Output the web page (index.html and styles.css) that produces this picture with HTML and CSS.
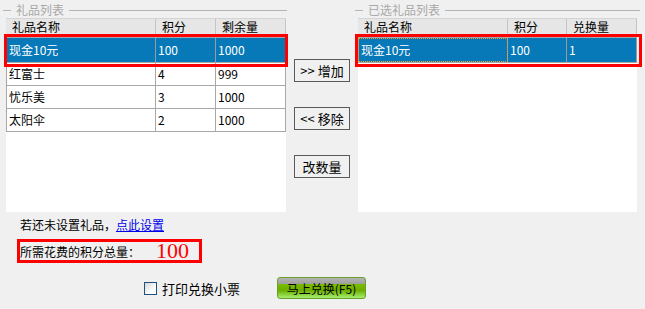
FILE: index.html
```html
<!DOCTYPE html>
<html lang="zh-CN">
<head>
    <meta charset="UTF-8">
    <title>礼品兑换</title>
    <link rel="stylesheet" href="styles.css">
</head>
<body>
    <div class="top">
        <div class="group group-left">
            <div class="group-title"><span>礼品列表</span></div>
            <div class="list">
                <div class="list-head">
                    <div>礼品名称</div>
                    <div>积分</div>
                    <div>剩余量</div>
                </div>
                <div class="rows">
                    <div class="row selected">
                        <div>现金10元</div><div>100</div><div>1000</div>
                    </div>
                    <div class="row">
                        <div>红富士</div><div>4</div><div>999</div>
                    </div>
                    <div class="row">
                        <div>忧乐美</div><div>3</div><div>1000</div>
                    </div>
                    <div class="row">
                        <div>太阳伞</div><div>2</div><div>1000</div>
                    </div>
                    <div class="mark mark-left"></div>
                </div>
            </div>
        </div>

        <div class="actions">
            <button class="btn">&gt;&gt; 增加</button>
            <button class="btn">&lt;&lt; 移除</button>
            <button class="btn">改数量</button>
        </div>

        <div class="group group-right">
            <div class="group-title"><span>已选礼品列表</span></div>
            <div class="list list-right">
                <div class="list-head">
                    <div>礼品名称</div>
                    <div>积分</div>
                    <div>兑换量</div>
                </div>
                <div class="rows">
                    <div class="row selected">
                        <div class="focus">现金10元</div><div>100</div><div>1</div>
                    </div>
                    <div class="mark mark-right"></div>
                </div>
            </div>
        </div>
    </div>

    <p class="hint">若还未设置礼品，<a href="#">点此设置</a></p>

    <div class="total">
        <span>所需花费的积分总量：</span>
        <span class="total-value">100</span>
    </div>

    <div class="footer">
        <label class="check"><span class="box"></span>打印兑换小票</label>
        <button class="go">马上兑换(F5)</button>
    </div>
</body>
</html>
```

FILE: styles.css
```css
body {
    margin: 0;
    background: #f0f0f0;
    font-family: "Noto Sans CJK SC", "DejaVu Sans", sans-serif;
    font-size: 12px;
    color: #000;
    width: 645px;
    height: 309px;
    overflow: hidden;
}
.top {
    display: flex;
    padding-left: 3px;
}
.group-left {
    width: 284px;
}
.group-right {
    width: 285px;
}
.group-title {
    display: flex;
    align-items: center;
    height: 18px;
    color: #a8a8a8;
    font-size: 12px;
    line-height: 17px;
}
.group-title span {
    align-self: flex-start;
    margin-top: 1px;
}
.group-title::before {
    content: "";
    width: 8px;
    height: 1px;
    background: #b4b4b4;
    margin: 2px 5px 0 0;
}
.group-title::after {
    content: "";
    flex: 1;
    height: 1px;
    background: #b4b4b4;
    margin: 2px 0 0 5px;
}
.list {
    margin-left: 3px;
    width: 280px;
    height: 194px;
    background: #fff;
}
.list-right {
    width: 279px;
}
.list-head {
    display: grid;
    grid-template-columns: 150px 60px 1fr;
    height: 15px;
    background: #e6e6e6;
    border-top: 1px solid #d4d4d4;
    font-size: 12px;
    line-height: 15px;
}
.list-right .list-head,
.list-right .row {
    grid-template-columns: 150px 59px 1fr;
}
.list-head div {
    padding-left: 6px;
    border-right: 1px solid #c4c4c4;
}
.rows {
    position: relative;
    margin-top: 3px;
}
.row {
    display: grid;
    grid-template-columns: 150px 60px 1fr;
    height: 22px;
    line-height: 22px;
    border-bottom: 1px solid #a8a8a8;
}
.row div {
    padding-left: 2px;
    border-right: 1px solid #a8a8a8;
}
.row div:first-child {
    border-left: 1px solid #a8a8a8;
}
.row.selected {
    height: 24px;
    line-height: 24px;
    background: #0779b8;
    color: #fff;
    border-top: 1px solid #a8a8a8;
}
.row.selected div {
    border-color: #9a9a9a;
}
.focus {
    outline: 1px dotted #e8a030;
    outline-offset: -1px;
}
/* red annotation frames */
.mark {
    position: absolute;
    top: -3px;
    height: 27px;
    border: 3px solid #ff0000;
}
.mark-left {
    left: -2px;
    width: 278px;
}
.mark-right {
    left: -3px;
    width: 281px;
}
.actions {
    display: flex;
    flex-direction: column;
    gap: 25px;
    padding: 59px 5px 0 7px;
}
.btn {
    width: 56px;
    height: 23px;
    padding: 0;
    background: #f0f0f0;
    border: 1px solid #5a5a5a;
    font-family: inherit;
    font-size: 13px;
    color: #000;
}
.hint {
    margin: 5px 0 0 20px;
    height: 15px;
    line-height: 15px;
}
.hint a {
    color: #0000ee;
}
.total {
    display: flex;
    align-items: center;
    box-sizing: border-box;
    width: 185px;
    height: 24px;
    margin: 7px 0 0 17px;
    border: 3px solid #ff0000;
}
.total-value {
    margin-left: 16px;
    font-family: "Liberation Serif", serif;
    font-size: 22px;
    line-height: 18px;
    color: #ff0000;
}
.footer {
    display: flex;
    align-items: center;
    height: 22px;
    margin-top: 14px;
    padding-left: 144px;
}
.check {
    display: flex;
    align-items: center;
    gap: 5px;
    width: 133px;
    font-size: 13px;
}
.box {
    width: 11px;
    height: 11px;
    border: 1px solid #1c5180;
    background: linear-gradient(135deg, #d8d8d8, #ffffff 70%);
}
.go {
    width: 89px;
    height: 22px;
    padding: 0;
    border: 1px solid #6aa02a;
    border-radius: 3px;
    background: linear-gradient(#b4b4b4 0, #a0a0a0 28%, #7cbc00 30%, #6cae00 62%, #a6f070 100%);
    font-family: inherit;
    font-size: 12px;
    color: #000;
}
```
